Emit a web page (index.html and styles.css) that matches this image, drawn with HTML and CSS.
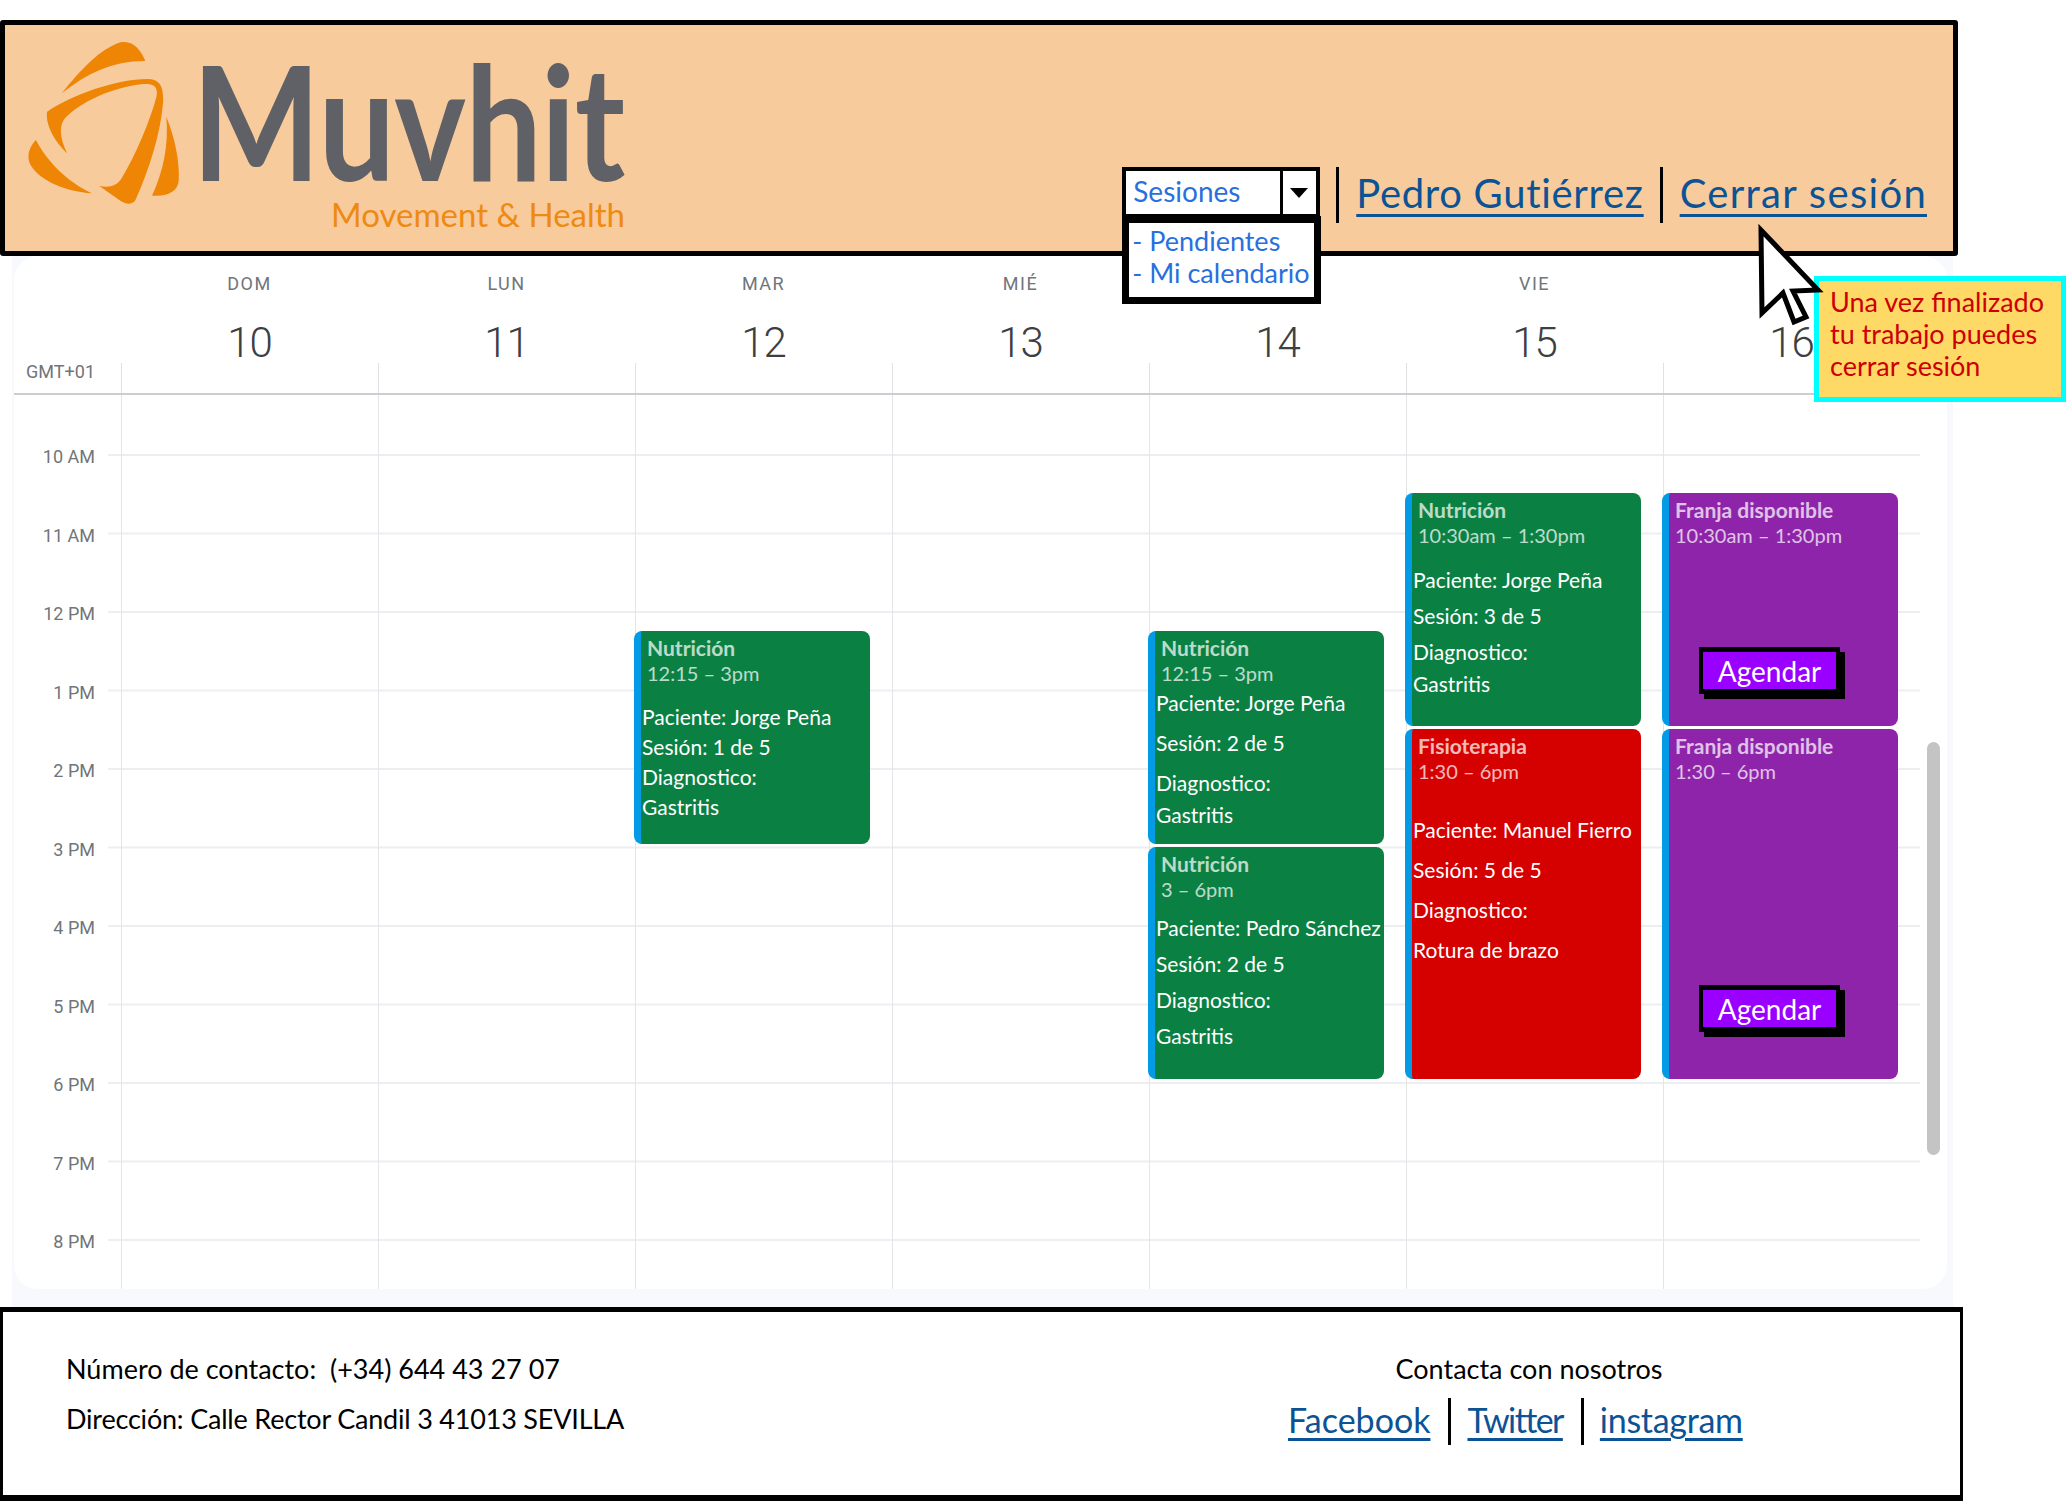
FILE: index.html
```html
<!DOCTYPE html>
<html lang="es">

<head>
  <title>Muvhit - Mi calendario</title>
  <meta charset="utf-8" />
  <link rel="stylesheet" href="styles.css">
</head>

<body>
  <header class="topbar">
    <div class="logo">
      <svg class="logo-mark" viewBox="60 115 345 495" preserveAspectRatio="none">
        <path d="M138 275C180 205 225 140 270 122C298 115 315 145 325 178C250 178 195 215 138 275Z" />
        <path d="M105 330C160 280 260 232 330 232C358 232 366 255 365 300C360 390 335 500 303 595C295 610 282 608 270 598L222 553C245 560 262 552 272 530C305 455 335 360 350 285C354 255 345 245 320 247C250 258 180 300 145 350C130 375 135 415 150 455C125 425 100 370 105 330Z" />
        <path d="M372 345C392 410 402 480 400 535C398 570 375 586 340 582C365 510 378 430 372 345Z" />
        <path d="M80 415C105 480 150 540 205 575C150 570 90 540 68 490C58 465 65 435 80 415Z" />
      </svg>
      <div class="logo-text">
        <span class="logo-name">Muvhit</span>
        <span class="logo-tag">Movement &amp; Health</span>
      </div>
    </div>

    <nav class="nav">
      <div class="select">
        <span class="select-value">Sesiones</span>
        <span class="select-arrow"></span>
        <ul class="select-menu">
          <li>- Pendientes</li>
          <li>- Mi calendario</li>
        </ul>
      </div>
      <a class="nav-link user" href="#">Pedro Gutiérrez</a>
      <a class="nav-link logout" href="#">Cerrar sesión</a>
    </nav>
  </header>

  <main class="calendar">
    <div class="sheet">
      <div class="week-head">
        <div class="gmt">GMT+01</div>
        <div class="day-head"><span class="day-name">DOM</span><span class="day-num">10</span><span class="tick"></span></div>
        <div class="day-head"><span class="day-name">LUN</span><span class="day-num">11</span><span class="tick"></span></div>
        <div class="day-head"><span class="day-name">MAR</span><span class="day-num">12</span><span class="tick"></span></div>
        <div class="day-head"><span class="day-name">MIÉ</span><span class="day-num">13</span><span class="tick"></span></div>
        <div class="day-head"><span class="day-name"></span><span class="day-num">14</span><span class="tick"></span></div>
        <div class="day-head"><span class="day-name">VIE</span><span class="day-num">15</span><span class="tick"></span></div>
        <div class="day-head"><span class="day-name"></span><span class="day-num">16</span><span class="tick"></span></div>
      </div>

      <div class="week-body">
        <div class="hours">
          <span>10 AM</span>
          <span>11 AM</span>
          <span>12 PM</span>
          <span>1 PM</span>
          <span>2 PM</span>
          <span>3 PM</span>
          <span>4 PM</span>
          <span>5 PM</span>
          <span>6 PM</span>
          <span>7 PM</span>
          <span>8 PM</span>
        </div>

        <div class="day"></div>
        <div class="day"></div>

        <div class="day">
          <article class="event green" style="top: 236px; height: 213px">
            <h4>Nutrición</h4>
            <time>12:15 – 3pm</time>
            <div class="details lines-30">
              <p>Paciente: Jorge Peña</p>
              <p>Sesión: 1 de 5</p>
              <p>Diagnostico:</p>
              <p>Gastritis</p>
            </div>
          </article>
        </div>

        <div class="day"></div>

        <div class="day">
          <article class="event green" style="top: 236px; height: 213px">
            <h4>Nutrición</h4>
            <time>12:15 – 3pm</time>
            <div class="details lines-40 pulled">
              <p>Paciente: Jorge Peña</p>
              <p>Sesión: 2 de 5</p>
              <p>Diagnostico:</p>
              <p class="pull-8">Gastritis</p>
            </div>
          </article>
          <article class="event green" style="top: 452px; height: 232px">
            <h4>Nutrición</h4>
            <time>3 – 6pm</time>
            <div class="details lines-36 near">
              <p>Paciente: Pedro Sánchez</p>
              <p>Sesión: 2 de 5</p>
              <p>Diagnostico:</p>
              <p>Gastritis</p>
            </div>
          </article>
        </div>

        <div class="day">
          <article class="event green" style="top: 98px; height: 233px">
            <h4>Nutrición</h4>
            <time>10:30am – 1:30pm</time>
            <div class="details lines-36 mid">
              <p>Paciente: Jorge Peña</p>
              <p>Sesión: 3 de 5</p>
              <p>Diagnostico:</p>
              <p class="pull-4">Gastritis</p>
            </div>
          </article>
          <article class="event red" style="top: 334px; height: 350px">
            <h4>Fisioterapia</h4>
            <time>1:30 – 6pm</time>
            <div class="details lines-40 far">
              <p>Paciente: Manuel Fierro</p>
              <p>Sesión: 5 de 5</p>
              <p>Diagnostico:</p>
              <p>Rotura de brazo</p>
            </div>
          </article>
        </div>

        <div class="day">
          <article class="event purple" style="top: 98px; height: 233px">
            <h4>Franja disponible</h4>
            <time>10:30am – 1:30pm</time>
            <button class="agendar">Agendar</button>
          </article>
          <article class="event purple" style="top: 334px; height: 350px">
            <h4>Franja disponible</h4>
            <time>1:30 – 6pm</time>
            <button class="agendar agendar-low">Agendar</button>
          </article>
        </div>

        <div class="scrollbar"></div>
      </div>
    </div>
  </main>

  <footer class="footer">
    <div class="contact">
      <p>Número de contacto:&nbsp; (+34) 644 43 27 07</p>
      <p class="address">Dirección: Calle Rector Candil 3 41013 SEVILLA</p>
    </div>
    <div class="social">
      <p class="social-title">Contacta con nosotros</p>
      <div class="social-links">
        <a href="#">Facebook</a>
        <a class="narrow" href="#">Twitter</a>
        <a href="#">instagram</a>
      </div>
    </div>
  </footer>

  <aside class="tip">Una vez finalizado tu trabajo puedes cerrar sesión</aside>

  <svg class="pointer" viewBox="1750 220 75 110">
    <path d="M1758 230L1759 313L1780 293L1791 322L1803 317L1790 291L1815 290Z" />
  </svg>
</body>

</html>
```

FILE: styles.css
```css
* {
  box-sizing: border-box;
}

html,
body {
  margin: 0;
  height: 1502px;
  overflow: hidden;
}

body {
  position: relative;
  background: #fff;
  font-family: Lato, "Noto Sans", sans-serif;
  color: #000;
}

p,
h4,
ul {
  margin: 0;
  padding: 0;
}

/* header */

.topbar {
  position: relative;
  z-index: 2;
  display: flex;
  justify-content: space-between;
  width: 1958px;
  height: 236px;
  margin-top: 20px;
  background: #f8cb9d;
  border: 5px solid #000;
  border-radius: 3px;
}

.logo {
  display: flex;
  padding: 15px 0 0 22px;
}

.logo-mark {
  width: 154px;
  height: 165px;
  fill: #ee8505;
}

.logo-text {
  display: flex;
  flex-direction: column;
  align-items: flex-end;
  width: 423px;
  margin-left: 21px;
}

.logo-name {
  align-self: flex-start;
  height: 140px;
  margin: 9px 0 0 -10px;
  font-size: 160px;
  line-height: 140px;
  font-weight: 700;
  color: #5f6166;
  letter-spacing: -1px;
  white-space: nowrap;
  transform: scaleX(.85);
  transform-origin: left;
}

.logo-tag {
  margin-top: 5px;
  font-size: 33px;
  line-height: 40px;
  color: #ee8a12;
}

.nav {
  display: flex;
  align-items: flex-start;
  padding: 142px 26px 0 0;
}

.select {
  position: relative;
  display: flex;
  width: 198px;
  height: 49px;
  background: #fff;
  border: 4px solid #000;
  border-bottom-width: 2px;
  font-size: 28px;
  color: #2a6fe0;
}

.select-value {
  flex: 1;
  padding-left: 7px;
  line-height: 40px;
}

.select-arrow {
  position: relative;
  width: 36px;
  border-left: 3px solid #000;
}

.select-arrow::after {
  content: "";
  position: absolute;
  top: 17px;
  left: 7px;
  border: 9px solid transparent;
  border-top: 10px solid #000;
  border-bottom: 0;
}

.select-menu {
  position: absolute;
  top: 45px;
  left: -4px;
  width: 199px;
  height: 88px;
  padding: 2px 0 0 3px;
  background: #fff;
  border: 7px solid #000;
  list-style: none;
  font-size: 27px;
  line-height: 32px;
  white-space: nowrap;
}

.nav-link {
  height: 56px;
  margin-left: 16px;
  padding-left: 17px;
  border-left: 3px solid #000;
  font-size: 40px;
  line-height: 52px;
  color: #0b5394;
  text-decoration-thickness: 3px;
  text-underline-offset: 6px;
}

.user {
  letter-spacing: .7px;
}

.logout {
  letter-spacing: 1.3px;
}

/* calendar */

.calendar {
  width: 1941px;
  height: 1051px;
  margin-left: 12px;
  padding: 0 6px 18px 2px;
  background: #f8f9fd;
}

.sheet {
  position: relative;
  height: 100%;
  background: #fff;
  border-radius: 24px;
  font-family: Roboto, "Noto Sans", sans-serif;
}

.week-head {
  display: grid;
  grid-template-columns: 107px repeat(7, 257px);
  height: 139px;
  border-bottom: 2px solid #cbcdd0;
}

.gmt {
  align-self: end;
  padding: 0 26px 11px 0;
  text-align: right;
  font-size: 18px;
  line-height: 20px;
  color: #70757a;
}

.day-head {
  display: flex;
  flex-direction: column;
  align-items: center;
  padding-top: 18px;
}

.day-name {
  height: 20px;
  margin-bottom: 29px;
  font-size: 18px;
  line-height: 20px;
  letter-spacing: 1.5px;
  color: #70757a;
}

.day-num {
  height: 40px;
  font-size: 42px;
  line-height: 40px;
  font-weight: 300;
  letter-spacing: -1px;
  color: #3c4043;
}

.tick {
  align-self: stretch;
  height: 30px;
  border-left: 1px solid #dfe1e5;
}

.week-body {
  position: relative;
  display: grid;
  grid-template-columns: 107px repeat(7, 257px);
  height: 894px;
  background-image: linear-gradient(#eceef1 2px, transparent 2px);
  background-size: 1812px 78.5px;
  background-position: 94px 59px;
  background-repeat: repeat-y;
}

.hours {
  display: flex;
  flex-direction: column;
  padding: 23px 26px 0 0;
  text-align: right;
  font-size: 18px;
  line-height: 78.5px;
  color: #70757a;
}

.day {
  position: relative;
  border-left: 1px solid #e3e5e8;
}

.event {
  position: absolute;
  left: -2px;
  display: flex;
  flex-direction: column;
  align-items: flex-start;
  width: 236px;
  padding-top: 4px;
  border-left: 7px solid #039be5;
  border-radius: 8px;
  font-family: Lato, "Noto Sans", sans-serif;
  font-size: 21px;
  line-height: 25px;
  color: #fff;
}

.green {
  background: #0b8043;
}

.red {
  background: #d50000;
}

.purple {
  background: #8e24aa;
}

.event h4,
.event time {
  padding-left: 6px;
  opacity: .72;
}

.event h4 {
  font-weight: 700;
  font-size: 21px;
}

.event time {
  margin-top: 1px;
  font-size: 20px;
}

.details {
  padding-left: 1px;
  white-space: nowrap;
}

.lines-30 {
  padding-top: 16px;
  line-height: 30px;
}

.lines-36 {
  line-height: 36px;
}

.lines-40 {
  line-height: 40px;
}

.near {
  padding-top: 8px;
}

.mid {
  padding-top: 14px;
}

.far {
  padding-top: 26px;
}

.pulled {
  margin-top: -3px;
}

.pull-8 {
  margin-top: -8px;
}

.pull-4 {
  margin-top: -4px;
}

.agendar {
  width: 141px;
  height: 47px;
  margin: auto 0 32px 30px;
  padding: 0;
  background: #9900ff;
  border: solid #000;
  border-width: 5px 4px;
  box-shadow: 5px 5px 0 #000;
  font-family: Lato, "Noto Sans", sans-serif;
  font-size: 28px;
  color: #fff;
}

.agendar-low {
  margin-bottom: 47px;
}

.scrollbar {
  position: absolute;
  top: 347px;
  left: 1913px;
  width: 13px;
  height: 413px;
  background: #c4c4c4;
  border-radius: 7px;
}

/* footer */

.footer {
  display: flex;
  justify-content: space-between;
  width: 1963px;
  height: 194px;
  padding: 32px 218px 0 63px;
  border: solid #000;
  border-width: 5px 3px 6px 3px;
  font-size: 27px;
  line-height: 50px;
}

.address {
  letter-spacing: -.2px;
}

.social {
  width: 454px;
  text-align: center;
}

.social-title {
  padding-left: 28px;
}

.social-links {
  display: flex;
  align-items: flex-start;
  margin-top: 4px;
}

.social-links a {
  height: 47px;
  margin-left: 18px;
  padding-left: 16px;
  border-left: 3px solid #000;
  font-size: 34px;
  line-height: 44px;
  color: #0b5394;
  text-decoration-thickness: 3px;
  text-underline-offset: 5px;
}

.social-links a:first-child {
  margin-left: 0;
  padding-left: 0;
  border-left: 0;
}

.social-links a:last-child {
  letter-spacing: -.3px;
}

.social-links .narrow {
  letter-spacing: -1.6px;
}

/* tooltip and pointer, over everything */

.tip {
  position: absolute;
  top: 276px;
  left: 1814px;
  z-index: 3;
  width: 252px;
  height: 126px;
  padding: 5px 6px 0 11px;
  background: #ffd966;
  border: 5px solid #00ffff;
  font-size: 27px;
  line-height: 32px;
  color: #cc0000;
}

.pointer {
  position: absolute;
  top: 220px;
  left: 1753px;
  z-index: 4;
  width: 75px;
  height: 110px;
  fill: #fff;
  stroke: #000;
  stroke-width: 5;
}
```
